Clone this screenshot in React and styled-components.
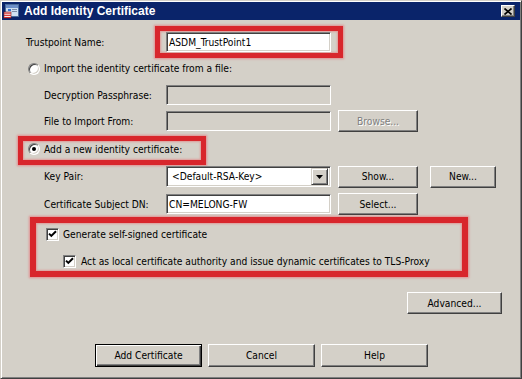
import React from 'react'
import styled, { createGlobalStyle } from 'styled-components'

const GlobalStyle = createGlobalStyle`
  html, body {
    margin: 0;
    padding: 0;
    background: #d4d0c8;
  }
  * {
    box-sizing: border-box;
  }
`

const Window = styled.div`
  width: 522px;
  height: 379px;
  background: #d4d0c8;
  border: 1px solid;
  border-color: #d4d0c8 #404040 #404040 #d4d0c8;
  box-shadow: inset 1px 1px #fff, inset -1px -1px #808080;
  padding: 1px;
  display: flex;
  flex-direction: column;
  color: #000;
  font-family: 'DejaVu Sans Condensed', 'DejaVu Sans', sans-serif;
  font-stretch: condensed;
  font-size: 10.2px;
`

const TitleBar = styled.div`
  height: 18px;
  background: #0a246a;
  display: flex;
  align-items: center;
  padding: 0 5px 0 1px;
  gap: 4px;
`

const TitleText = styled.span`
  flex: 1;
  color: #fff;
  font-family: 'Liberation Sans', Arial, sans-serif;
  font-weight: bold;
  font-size: 12px;
`

const CloseButton = styled.div`
  width: 14px;
  height: 12px;
  background: #d4d0c8;
  border: 1px solid;
  border-color: #fff #404040 #404040 #fff;
  box-shadow: inset -1px -1px #808080;
  display: flex;
  align-items: center;
  justify-content: center;
`

const Body = styled.div`
  flex: 1;
  display: flex;
  flex-direction: column;
`

const Row = styled.div`
  display: flex;
  align-items: center;
  height: ${(p) => p.$h}px;
  margin-top: ${(p) => p.$top}px;
  margin-left: ${(p) => p.$left}px;
  gap: ${(p) => p.$gap || 0}px;
`

const Label = styled.span`
  width: ${(p) => p.$w}px;
  flex: none;
  white-space: nowrap;
`

const Highlight = styled.div`
  display: flex;
  align-items: ${(p) => p.$align || 'center'};
  width: ${(p) => p.$w}px;
  height: ${(p) => p.$h}px;
  border: ${(p) => p.$b || 5}px solid #d8262c;
  box-shadow: 0 0 2px 1px rgba(236, 90, 96, 0.55), inset 0 0 2px 1px rgba(236, 90, 96, 0.45);
  padding: ${(p) => p.$pad};
`

const Field = styled.div`
  width: ${(p) => p.$w || 165}px;
  height: ${(p) => p.$h || 20}px;
  flex: none;
  background: ${(p) => (p.$disabled ? '#d4d0c8' : '#fff')};
  border: 1px solid;
  border-color: #808080 #fff #fff #808080;
  box-shadow: inset 1px 1px #404040, inset -1px -1px #d4d0c8;
  display: flex;
  align-items: center;
  padding-left: ${(p) => p.$pl || 2}px;
  white-space: nowrap;
  overflow: hidden;
`

const SelectBox = styled(Field)`
  padding-right: 2px;
`

const SelectText = styled.span`
  flex: 1;
`

const DropButton = styled.div`
  width: 17px;
  height: 17px;
  flex: none;
  background: #d4d0c8;
  border: 1px solid;
  border-color: #d4d0c8 #404040 #404040 #d4d0c8;
  box-shadow: inset 1px 1px #fff, inset -1px -1px #808080;
  display: flex;
  align-items: center;
  justify-content: center;
`

const Button = styled.div`
  width: ${(p) => p.$w}px;
  height: ${(p) => p.$h || 22}px;
  flex: none;
  margin-left: ${(p) => p.$ml || 0}px;
  background: #d4d0c8;
  border: 1px solid;
  border-color: ${(p) => (p.$default ? '#000' : '#fff #404040 #404040 #fff')};
  box-shadow: ${(p) =>
    p.$default
      ? 'inset 1px 1px #fff, inset -1px -1px #404040, inset -2px -2px #808080'
      : 'inset -1px -1px #808080'};
  display: flex;
  align-items: center;
  justify-content: center;
  color: ${(p) => (p.$disabled ? '#808080' : '#000')};
  text-shadow: ${(p) => (p.$disabled ? '1px 1px #fff' : 'none')};
  white-space: nowrap;
`

const Choice = styled.div`
  display: flex;
  align-items: center;
  gap: ${(p) => p.$gap || 4}px;
  white-space: nowrap;
`

const Radio = styled.span`
  width: 12px;
  height: 12px;
  flex: none;
  border-radius: 50%;
  background: #fff;
  border: 1px solid;
  border-color: #808080 #fff #fff #808080;
  box-shadow: inset 1px 1px #404040, inset -1px -1px #d4d0c8;
  display: flex;
  align-items: center;
  justify-content: center;
  &::after {
    content: '';
    width: 4px;
    height: 4px;
    border-radius: 50%;
    background: ${(p) => (p.$checked ? '#000' : 'transparent')};
  }
`

const Check = styled.span`
  width: 13px;
  height: 13px;
  flex: none;
  background: #fff;
  border: 1px solid;
  border-color: #808080 #fff #fff #808080;
  box-shadow: inset 1px 1px #404040, inset -1px -1px #d4d0c8;
  display: flex;
  align-items: center;
  justify-content: center;
`

const CheckGroup = styled(Highlight)`
  flex-direction: column;
  align-items: flex-start;
  margin-top: 2px;
  margin-left: 28px;
`

const SubChoice = styled(Choice)`
  margin-top: ${(p) => p.$top}px;
  margin-left: ${(p) => p.$left}px;
`

const TitleIcon = () => (
  <svg width="17" height="16" viewBox="0 0 17 16">
    <rect x="2.5" y="1.5" width="13" height="12" fill="#cfe0f2" stroke="#4a6a9a" />
    <rect x="3" y="2" width="12" height="3" fill="#6d8fc8" />
    <rect x="5" y="6" width="3" height="2" fill="#2f6fd0" />
    <rect x="9" y="6" width="5" height="1" fill="#7d8da8" />
    <rect x="9" y="8" width="5" height="1" fill="#7d8da8" />
    <rect x="5" y="9" width="3" height="2" fill="#2f6fd0" />
    <rect x="1" y="9" width="7" height="6" fill="#fff" stroke="#7a1a1a" strokeWidth="0.6" />
    <rect x="1" y="9.5" width="7" height="1.2" fill="#d02828" />
    <rect x="1" y="11.7" width="7" height="1.2" fill="#d02828" />
    <rect x="1" y="13.9" width="7" height="1.1" fill="#d02828" />
  </svg>
)

const CloseGlyph = () => (
  <svg width="8" height="7" viewBox="0 0 8 7">
    <path d="M0.5 0.5 L7.5 6.5 M7.5 0.5 L0.5 6.5" stroke="#000" strokeWidth="1.7" />
  </svg>
)

const ArrowGlyph = () => (
  <svg width="7" height="4" viewBox="0 0 7 4">
    <polygon points="0,0 7,0 3.5,4" fill="#000" />
  </svg>
)

const CheckGlyph = () => (
  <svg width="9" height="9" viewBox="0 0 9 9">
    <polyline points="1,3.6 3.3,5.9 8,1.2" fill="none" stroke="#000" strokeWidth="2" />
  </svg>
)

const App = () => (
  <>
    <GlobalStyle />
    <Window>
      <TitleBar>
        <TitleIcon />
        <TitleText>Add Identity Certificate</TitleText>
        <CloseButton>
          <CloseGlyph />
        </CloseButton>
      </TitleBar>
      <Body>
        <Row $h={32} $top={6} $left={24}>
          <Label $w={129}>Trustpoint Name:</Label>
          <Highlight $w={188} $h={32} $pad="1px 6px">
            <Field>ASDM_TrustPoint1</Field>
          </Highlight>
        </Row>

        <Row $h={13} $top={4} $left={26}>
          <Choice>
            <Radio />
            <span>Import the identity certificate from a file:</span>
          </Choice>
        </Row>

        <Row $h={20} $top={10} $left={42}>
          <Label $w={122}>Decryption Passphrase:</Label>
          <Field $disabled />
        </Row>

        <Row $h={22} $top={5} $left={42} $gap={7}>
          <Label $w={115}>File to Import From:</Label>
          <Field $disabled />
          <Button $w={80} $disabled>
            Browse...
          </Button>
        </Row>

        <Row $h={29} $top={4} $left={16}>
          <Highlight $w={188} $h={29} $align="flex-start" $pad="2px 0 0 5px">
            <Choice>
              <Radio $checked />
              <span>Add a new identity certificate:</span>
            </Choice>
          </Highlight>
        </Row>

        <Row $h={23} $top={0} $left={42}>
          <Label $w={122}>Key Pair:</Label>
          <SelectBox $h={21} $pl={5}>
            <SelectText>&lt;Default-RSA-Key&gt;</SelectText>
            <DropButton>
              <ArrowGlyph />
            </DropButton>
          </SelectBox>
          <Button $w={80} $ml={7}>
            Show...
          </Button>
          <Button $w={66} $ml={12}>
            New...
          </Button>
        </Row>

        <Row $h={22} $top={5} $left={42} $gap={7}>
          <Label $w={115}>Certificate Subject DN:</Label>
          <Field>CN=MELONG-FW</Field>
          <Button $w={80}>Select...</Button>
        </Row>

        <CheckGroup $w={438} $h={60} $b={6} $pad="5px 0 0 10px">
          <Choice>
            <Check>
              <CheckGlyph />
            </Check>
            <span>Generate self-signed certificate</span>
          </Choice>
          <SubChoice $top={14} $left={17} $gap={5}>
            <Check>
              <CheckGlyph />
            </Check>
            <span>Act as local certificate authority and issue dynamic certificates to TLS-Proxy</span>
          </SubChoice>
        </CheckGroup>

        <Row $h={22} $top={15} $left={405}>
          <Button $w={95}>Advanced...</Button>
        </Row>

        <Row $h={23} $top={30} $left={93} $gap={6}>
          <Button $w={107} $h={23} $default>
            Add Certificate
          </Button>
          <Button $w={107} $h={23}>
            Cancel
          </Button>
          <Button $w={107} $h={23}>
            Help
          </Button>
        </Row>
      </Body>
    </Window>
  </>
)

export default App
